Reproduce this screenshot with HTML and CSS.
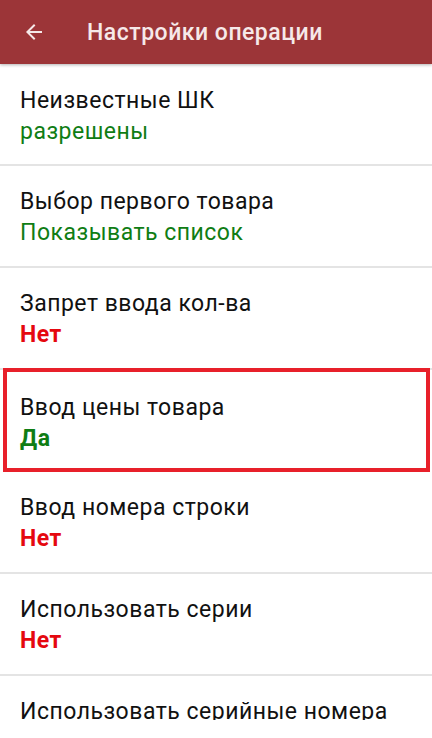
FILE: index.html
```html
<!DOCTYPE html>
<html lang="ru">
<head>
    <meta charset="UTF-8">
    <meta name="viewport" content="width=device-width, initial-scale=1.0">
    <title>Настройки операции</title>
    <link rel="stylesheet" href="styles.css">
</head>
<body>
    <div class="toolbar">
        <svg class="back" width="24" height="24" viewBox="0 0 24 24">
            <path d="M20 11H7.83l5.59-5.59L12 4l-8 8 8 8 1.41-1.41L7.83 13H20v-2z" fill="currentColor"/>
        </svg>
        <h1>Настройки операции</h1>
    </div>

    <div class="lista">
        <div class="fila">
            <div class="nombre">Неизвестные ШК</div>
            <div class="valor verde">разрешены</div>
        </div>
        <div class="fila">
            <div class="nombre">Выбор первого товара</div>
            <div class="valor verde">Показывать список</div>
        </div>
        <div class="fila">
            <div class="nombre">Запрет ввода кол-ва</div>
            <div class="valor rojo fuerte">Нет</div>
        </div>
        <div class="fila marcada">
            <div class="nombre">Ввод цены товара</div>
            <div class="valor verde fuerte">Да</div>
        </div>
        <div class="fila">
            <div class="nombre">Ввод номера строки</div>
            <div class="valor rojo fuerte">Нет</div>
        </div>
        <div class="fila">
            <div class="nombre">Использовать серии</div>
            <div class="valor rojo fuerte">Нет</div>
        </div>
        <div class="fila">
            <div class="nombre">Использовать серийные номера</div>
            <div class="valor rojo fuerte">Нет</div>
        </div>
    </div>
</body>
</html>
```

FILE: styles.css
```css
body {
    margin: 0;
    font-family: Roboto, "Liberation Sans", sans-serif;
    background-color: #fff;
    color: #111;
}

.toolbar {
    display: flex;
    align-items: center;
    height: 64px;
    padding: 0 0 0 22px;
    background-color: #9c3538;
    color: #f6e9e9;
    box-shadow: 0 1px 3px rgba(0, 0, 0, 0.3);
    position: relative;
    z-index: 1;
}

.toolbar .back {
    width: 24px;
    height: 24px;
}

.toolbar h1 {
    margin: 0 0 0 41px;
    font-size: 23px;
    font-weight: 500;
    letter-spacing: 0.5px;
}

.lista {
    height: 656px;
    overflow: hidden;
}

.fila {
    box-sizing: border-box;
    height: 102px;
    padding: 20px 20px 0;
    border-bottom: 2px solid #e4e4e4;
}

.fila:first-child {
    padding-top: 21px;
}

.fila.marcada {
    margin: -2px 2px 0 3px;
    height: 104px;
    padding: 20px 13px 0;
    border: 4px solid #e8202a;
}

.nombre,
.valor {
    font-size: 23px;
    line-height: 31px;
    letter-spacing: 0.5px;
}

.verde {
    color: #0f7d14;
}

.rojo {
    color: #e5080f;
}

.fuerte {
    font-weight: 700;
}
```
